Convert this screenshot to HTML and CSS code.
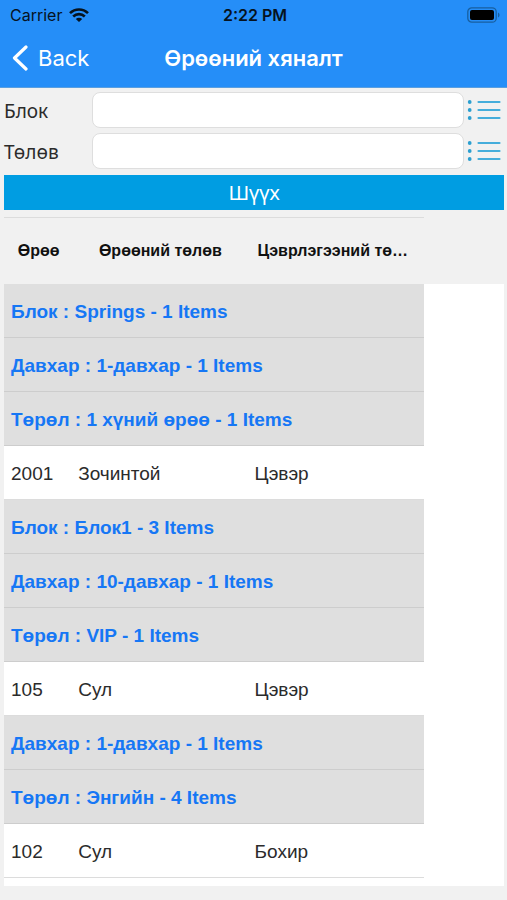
FILE: index.html
```html
<!DOCTYPE html>
<html lang="mn">
<head>
<meta charset="utf-8">
<meta name="viewport" content="width=device-width, initial-scale=1">
<title>Өрөөний хяналт</title>
<link rel="stylesheet" href="styles.css">
</head>
<body>
<header class="top">
  <div class="status">
    <div class="carrier"><span>Carrier</span>
      <svg class="wifi" viewBox="0 0 20 14" aria-hidden="true"><g fill="none" stroke="#06131f" stroke-width="2.6"><path d="M1 5.2C6 .2 14 .2 19 5.2"/><path d="M4.2 8.5c3.3-3.2 8.300-3.200 11.600 0"/></g><path fill="#06131f" d="M6.800 10.900c1.800-1.700 4.600-1.700 6.400 0L10 14z"/></svg>
    </div>
    <span class="time">2:22 PM</span>
    <svg class="battery" viewBox="0 0 33 16" aria-hidden="true"><rect x=".8" y=".8" width="28.400" height="14.400" rx="4" fill="none" stroke="#185f9f" stroke-width="1.300"/><rect x="3" y="3" width="24" height="10" rx="2" fill="#000"/><path d="M31 5.500c2 .8 2 4.200 0 5z" fill="#185f9f"/></svg>
  </div>
  <nav class="nav">
    <a class="back" href="#"><svg class="chevron" viewBox="0 0 16 26" aria-hidden="true"><path d="M14 2 2.500 13 14 24" fill="none" stroke="#fff" stroke-width="3.200" stroke-linecap="round" stroke-linejoin="round"/></svg><span>Back</span></a>
    <h1 class="title">Өрөөний хяналт</h1>
  </nav>
</header>
<main class="content">
  <form class="filters">
    <div class="field">
      <label for="block">Блок</label>
      <input id="block" type="text">
      <button class="pick" type="button" aria-label="Блок"><svg viewBox="0 0 34 20" aria-hidden="true"><path d="M11.500 2h21M11.500 10h21M11.500 18h21" stroke="#45addb" stroke-width="2.200" stroke-linecap="round"/><g fill="#2b9fd0"><circle cx="2.700" cy="2" r="1.900"/><circle cx="2.700" cy="10" r="1.900"/><circle cx="2.700" cy="18" r="1.900"/></g></svg></button>
    </div>
    <div class="field">
      <label for="state">Төлөв</label>
      <input id="state" type="text">
      <button class="pick" type="button" aria-label="Төлөв"><svg viewBox="0 0 34 20" aria-hidden="true"><path d="M11.500 2h21M11.500 10h21M11.500 18h21" stroke="#45addb" stroke-width="2.200" stroke-linecap="round"/><g fill="#2b9fd0"><circle cx="2.700" cy="2" r="1.900"/><circle cx="2.700" cy="10" r="1.900"/><circle cx="2.700" cy="18" r="1.900"/></g></svg></button>
    </div>
    <button class="search" type="submit">Шүүх</button>
  </form>
  <section class="panel">
    <table class="rooms">
      <colgroup><col class="c-room"><col class="c-state"><col class="c-clean"></colgroup>
      <thead>
        <tr><th scope="col">Өрөө</th><th scope="col">Өрөөний төлөв</th><th scope="col">Цэврлэгээний төлөв</th></tr>
      </thead>
      <tbody>
        <tr class="group"><th colspan="3">Блок : Springs - 1 Items</th></tr>
        <tr class="group"><th colspan="3">Давхар : 1-давхар - 1 Items</th></tr>
        <tr class="group"><th colspan="3">Төрөл : 1 хүний өрөө - 1 Items</th></tr>
        <tr><td>2001</td><td>Зочинтой</td><td>Цэвэр</td></tr>
        <tr class="group"><th colspan="3">Блок : Блок1 - 3 Items</th></tr>
        <tr class="group"><th colspan="3">Давхар : 10-давхар - 1 Items</th></tr>
        <tr class="group"><th colspan="3">Төрөл : VIP - 1 Items</th></tr>
        <tr><td>105</td><td>Сул</td><td>Цэвэр</td></tr>
        <tr class="group"><th colspan="3">Давхар : 1-давхар - 1 Items</th></tr>
        <tr class="group"><th colspan="3">Төрөл : Энгийн - 4 Items</th></tr>
        <tr><td>102</td><td>Сул</td><td>Бохир</td></tr>
      </tbody>
    </table>
  </section>
</main>
</body>
</html>
```
FILE: styles.css
```css
* { box-sizing: border-box; }

body {
  margin: 0;
  background: #f1f1f1;
  color: #2b2b2b;
  font-family: "Liberation Sans", sans-serif;
}

.top {
  background: #258ef8;
  border-bottom: 1px solid #5a9fe0;
  font-family: Inter, sans-serif;
}

.status,
.nav {
  display: grid;
  grid-template-columns: 1fr auto 1fr;
  align-items: center;
}

.status {
  height: 29px;
  padding: 0 7px 0 10px;
  color: #06131f;
  font-size: 16px;
}

.carrier { display: flex; align-items: center; gap: 7px; }
.wifi { width: 20px; height: 14px; }
.time { font-weight: 600; }
.battery { width: 33px; height: 16px; justify-self: end; }

.nav {
  height: 58px;
  padding: 0 12px;
  color: #fff;
}

.back {
  display: flex;
  align-items: center;
  gap: 10px;
  color: #fff;
  font-size: 22px;
  text-decoration: none;
}

.chevron { width: 16px; height: 26px; }

.title {
  margin: 0;
  font-size: 22px;
  font-weight: 600;
  white-space: nowrap;
}

.content { padding: 4px 3px 0 4px; }

.filters {
  display: flex;
  flex-direction: column;
  gap: 5px;
  font-family: "Noto Sans", sans-serif;
}

.field {
  display: grid;
  grid-template-columns: 88px 1fr 40px;
  align-items: center;
}

.field label { padding-top: 2px; font-size: 19px; line-height: 28px; }

.field input {
  width: 100%;
  height: 36px;
  padding: 0 10px;
  border: 1px solid #dedede;
  border-radius: 8px;
  background: #fff;
  font-size: 20px;
}

.pick {
  height: 36px;
  padding: 0 3px;
  border: 0;
  background: none;
}

.pick svg { display: block; width: 34px; height: 20px; }

.search {
  height: 35px;
  margin-top: 1px;
  padding: 0;
  border: 0;
  background: #009de2;
  color: #fff;
  font-family: inherit;
  font-size: 20px;
  line-height: 35px;
}

.panel {
  margin-top: 7px;
  padding-bottom: 8px;
  background: linear-gradient(#f1f1f1 67px, #fff 67px);
}

.rooms {
  width: 84%;
  table-layout: fixed;
  border-collapse: separate;
  border-spacing: 0;
  font-size: 19px;
}

.c-room { width: 16%; }
.c-state,
.c-clean { width: 42%; }

.rooms th,
.rooms td {
  height: 54px;
  padding: 3px 6px 0 7px;
  border-bottom: 1px solid #dcdcdc;
  text-align: left;
  white-space: nowrap;
}

.rooms thead th {
  height: 67px;
  padding: 0 8px 0 10px;
  border-top: 1px solid #dcdcdc;
  border-bottom: 0;
  overflow: hidden;
  color: #111;
  font-size: 16px;
  text-align: center;
  text-overflow: ellipsis;
}

.rooms .group th {
  border-bottom-color: #cdcdcd;
  background: #dfdfdf;
  color: #1677f5;
}
```
